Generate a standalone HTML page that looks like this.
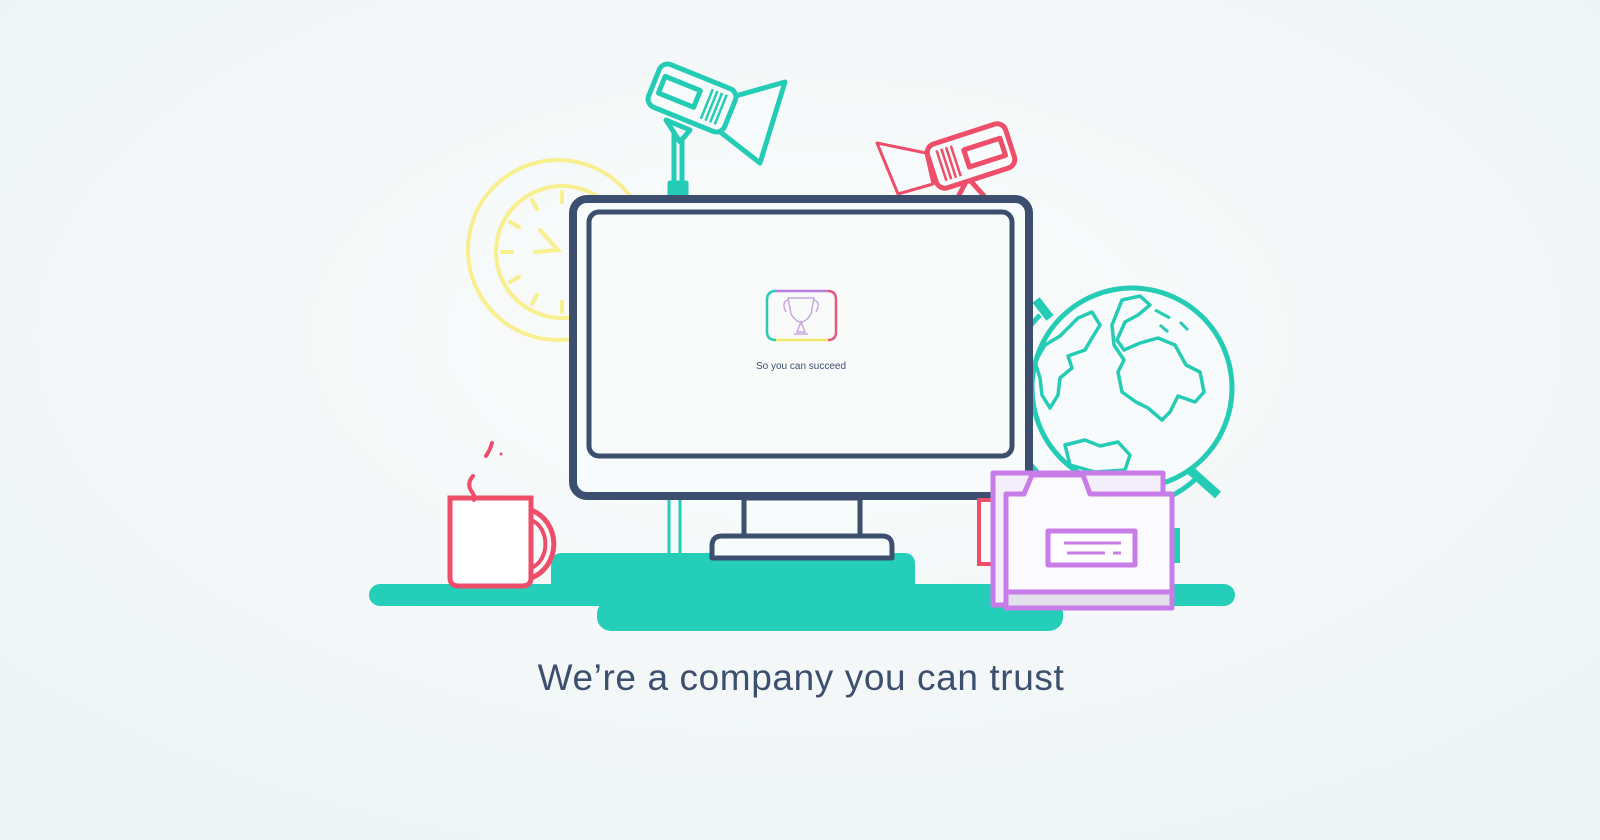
<!DOCTYPE html>
<html><head><meta charset="utf-8"><style>
html,body{margin:0;padding:0;width:1600px;height:840px;overflow:hidden;background:#f4f8f8}
svg{display:block}
</style></head><body>
<svg width="1600" height="840" viewBox="0 0 1600 840" xmlns="http://www.w3.org/2000/svg">
<defs>
<radialGradient id="bg" cx="50%" cy="40%" r="70%"><stop offset="0" stop-color="#fbfcfc"/><stop offset="1" stop-color="#eef4f4"/></radialGradient>
</defs>
<rect width="1600" height="840" fill="url(#bg)"/>

<!-- clock -->
<g fill="none" stroke="#f8ef8e" stroke-width="4">
<circle cx="558" cy="250" r="90"/>
<circle cx="562" cy="252" r="66"/>
<g stroke-linecap="round">
<line x1="562" y1="192" x2="562" y2="202"/><line x1="532" y1="200" x2="537" y2="209"/><line x1="510" y1="222" x2="519" y2="227"/>
<line x1="502" y1="252" x2="512" y2="252"/><line x1="510" y1="282" x2="519" y2="277"/><line x1="532" y1="304" x2="537" y2="295"/>
<line x1="562" y1="312" x2="562" y2="302"/>
<polyline points="540,230 558,250 535,252"/>
</g></g>

<!-- left spotlight -->
<g fill="none" stroke="#24ccb6" stroke-width="5" stroke-linejoin="round">
<line x1="674" y1="128" x2="674" y2="185"/><line x1="682" y1="128" x2="682" y2="185"/>
<rect x="670" y="183" width="16" height="14" fill="#24ccb6"/>
<polygon points="666,120 690,130 680,142" fill="#f4f8f8"/>
<polygon points="732,97 785,82 760,163 719,131" fill="#f8fbfb"/>
<g transform="rotate(22 692 98)">
<rect x="651" y="75" width="82" height="46" rx="9" fill="#f8fbfb"/>
<rect x="659" y="88" width="38" height="18"/>
<line x1="708" y1="82" x2="708" y2="114" stroke-width="2.5"/><line x1="713" y1="82" x2="713" y2="114" stroke-width="2.5"/><line x1="718" y1="82" x2="718" y2="114" stroke-width="2.5"/><line x1="723" y1="82" x2="723" y2="114" stroke-width="2.5"/>
</g></g>

<!-- right spotlight -->
<g fill="none" stroke="#ee4e6a" stroke-width="5" stroke-linejoin="round">
<polyline points="958,197 968,178 985,197"/>
<polygon points="926,153 877,143 898,194 933,184" fill="#f8fbfb" stroke-width="3"/>
<g transform="rotate(-18 971 156)">
<rect x="930" y="133" width="82" height="46" rx="9" fill="#f8fbfb"/>
<rect x="966" y="148" width="38" height="18"/>
<line x1="940" y1="140" x2="940" y2="172" stroke-width="2.5"/><line x1="945" y1="140" x2="945" y2="172" stroke-width="2.5"/><line x1="950" y1="140" x2="950" y2="172" stroke-width="2.5"/><line x1="955" y1="140" x2="955" y2="172" stroke-width="2.5"/>
</g></g>

<!-- globe -->
<g fill="none" stroke="#24ccb6" stroke-width="5" stroke-linejoin="round">
<path d="M1036 300 L1050 318" stroke-width="9"/>
<path d="M1190 470 L1218 495" stroke-width="9"/>
<path d="M1040 315 A110 110 0 0 0 1200 475"/>
<circle cx="1132" cy="388" r="100" fill="#f8fbfb"/>
<path d="M1122 300 L1140 296 L1150 305 L1138 315 L1125 322 L1117 340 L1124 350 L1140 343 L1158 338 L1175 345 L1186 365 L1200 372 L1204 392 L1195 402 L1178 396 L1170 412 L1162 420 L1148 408 L1136 402 L1122 392 L1118 372 L1124 360 L1114 345 L1112 325 Z" stroke-width="3.5"/>
<path d="M1078 318 L1092 312 L1100 325 L1092 338 L1085 350 L1068 356 L1072 368 L1060 378 L1058 395 L1050 408 L1042 395 L1040 378 L1035 362 L1045 345 L1060 336 Z" stroke-width="3.5"/>
<path d="M1065 445 L1085 440 L1100 446 L1118 442 L1130 455 L1125 470 L1095 472 L1070 465 Z" stroke-width="3.5"/>
<path d="M1155 310 L1170 318 M1180 322 L1188 330 M1160 325 L1168 332" stroke-width="3"/>
</g>

<!-- teal pole behind monitor -->
<g stroke="#24ccb6" stroke-width="3"><line x1="669" y1="498" x2="669" y2="558"/><line x1="680" y1="498" x2="680" y2="558"/></g>

<!-- ground -->
<g fill="#24ceb8">
<rect x="551" y="553" width="364" height="40" rx="10"/>
<rect x="369" y="584" width="866" height="22" rx="11"/>
<rect x="597" y="600" width="466" height="31" rx="14"/>
<rect x="1168" y="528" width="12" height="35"/>
</g>

<!-- monitor -->
<g fill="none" stroke="#3d4f6e" stroke-linejoin="round">
<rect x="744" y="498" width="116" height="40" stroke-width="5" fill="#f8fbfb"/>
<path d="M712 558 L712 546 Q712 536 722 536 L882 536 Q892 536 892 546 L892 558 Z" stroke-width="5" fill="#f8fbfb"/>
<rect x="573" y="199" width="456" height="297" rx="14" stroke-width="8" fill="#f8fbfb"/>
<rect x="589" y="212" width="423" height="244" rx="10" stroke-width="5" fill="#f9fbfb"/>
</g>

<!-- logo -->
<g fill="none" stroke-width="2.5">
<path d="M776 291 L828 291" stroke="#b57ee0"/>
<path d="M828 291 Q836 291 836 300 L836 332 Q836 340 828 340" stroke="#e65a7c"/>
<path d="M828 340 L776 340" stroke="#f2e86a"/>
<path d="M776 340 Q767 340 767 332 L767 300 Q767 291 776 291" stroke="#2ccab4"/>
<path d="M788 298 L814 298 L811 314 Q806 322 801 322 Q796 322 791 314 Z M788 300 Q781 302 786 312 M814 300 Q821 302 816 312 M801 322 L797 332 L805 332 Z M794 334 L808 334" stroke="#c9a7e0" stroke-width="1.5"/>
</g>
<text x="801" y="369" text-anchor="middle" font-family="Liberation Sans, sans-serif" font-size="10" fill="#3d4f6e">So you can succeed</text>

<!-- mug -->
<g fill="none" stroke="#ee4e6a" stroke-linecap="round">
<path d="M531 510 A34 36 0 0 1 531 578" stroke-width="5" fill="#f8fbfb"/>
<path d="M531 520 A20 25 0 0 1 531 568" stroke-width="4"/>
<path d="M450 498 L531 498 L531 578 Q531 586 522 586 L459 586 Q450 586 450 578 Z" stroke-width="5" fill="#fff"/>
<path d="M473 476 Q466 484 472 492 Q476 498 474 500" stroke-width="4"/>
<path d="M492 443 Q490 450 486 456" stroke-width="4"/>
<circle cx="501" cy="454" r="1.5" fill="#ee4e6a" stroke="none"/>
</g>

<!-- red item -->
<rect x="979" y="500" width="14" height="64" fill="#f8fbfb" stroke="#ee4e6a" stroke-width="4"/>

<!-- folder -->
<g stroke="#c77ce8" stroke-width="5" stroke-linejoin="round">
<rect x="993" y="473" width="170" height="132" fill="#f4eefa"/>
<path d="M1006 494 L1024 494 L1032 475 L1083 475 L1090 494 L1172 494 L1172 608 L1006 608 Z" fill="#fbfbfd"/>
<rect x="1006" y="592" width="166" height="16" fill="#e4e0ea"/>
<rect x="1048" y="531" width="87" height="34" fill="#fff"/>
<line x1="1064" y1="543" x2="1121" y2="543" stroke-width="3"/>
<line x1="1067" y1="553" x2="1105" y2="553" stroke-width="3"/>
<line x1="1113" y1="553" x2="1121" y2="553" stroke-width="3"/>
</g>

<text x="801" y="690" text-anchor="middle" font-family="Liberation Sans, sans-serif" font-size="37" letter-spacing="0.6" fill="#3d4f6e">We’re a company you can trust</text>
</svg>
</body></html>
